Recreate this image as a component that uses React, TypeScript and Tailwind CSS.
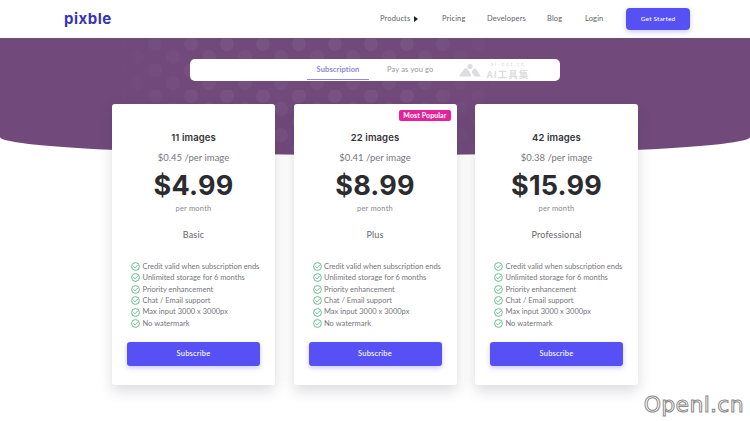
const plans = [
  { name: "11 images", unit: "$0.45 /per image", price: "$4.99", tier: "Basic" },
  { name: "22 images", unit: "$0.41 /per image", price: "$8.99", tier: "Plus", popular: true },
  { name: "42 images", unit: "$0.38 /per image", price: "$15.99", tier: "Professional" },
];

const features = [
  "Credit valid when subscription ends",
  "Unlimited storage for 6 months",
  "Priority enhancement",
  "Chat / Email support",
  "Max input 3000 x 3000px",
  "No watermark",
];

function CheckIcon() {
  return (
    <svg width="9" height="9" viewBox="0 0 18 18" fill="none" stroke="#5fb98a" strokeWidth="1.9" className="shrink-0">
      <circle cx="9" cy="9" r="7.8" />
      <path d="M5.4 9.2l2.5 2.5 4.8-5" strokeLinecap="round" strokeLinejoin="round" />
    </svg>
  );
}

function HexPattern({ className }: { className: string }) {
  return (
    <svg className={className} width="400" height="117" aria-hidden="true">
      <defs>
        <pattern id="hex" width="36" height="26" patternUnits="userSpaceOnUse">
          <circle cx="9" cy="6" r="7" fill="#fff" fillOpacity="0.05" />
          <circle cx="27" cy="19" r="7" fill="#fff" fillOpacity="0.04" />
        </pattern>
        <linearGradient id="hexFade" x1="0" x2="1" y1="0" y2="0">
          <stop offset="0" stopColor="#fff" stopOpacity="0" />
          <stop offset="0.25" stopColor="#fff" stopOpacity="1" />
          <stop offset="0.75" stopColor="#fff" stopOpacity="1" />
          <stop offset="1" stopColor="#fff" stopOpacity="0" />
        </linearGradient>
        <mask id="hexMask">
          <rect width="400" height="117" fill="url(#hexFade)" />
        </mask>
      </defs>
      <rect width="400" height="117" fill="url(#hex)" mask="url(#hexMask)" />
    </svg>
  );
}

function PlanCard({ plan }: { plan: (typeof plans)[number] }) {
  return (
    <div className="relative flex h-[281px] w-[163px] flex-col items-center rounded-[3px] bg-white px-[15px] shadow-[0_6px_14px_rgba(40,40,60,0.16)]">
      {plan.popular && (
        <span className="absolute top-[6px] right-[6px] rounded-[2px] bg-[#e6219a] px-[4px] py-[1px] text-[7px] leading-[9px] font-bold tracking-[0.1px] text-white">
          Most Popular
        </span>
      )}
      <p className="mt-[27px] font-['Inter',sans-serif] text-[9.5px] leading-[14px] font-semibold tracking-[0.1px] text-[#333338]">{plan.name}</p>
      <p className="mt-[6px] text-[9.5px] leading-[14px] text-[#77777d]">{plan.unit}</p>
      <p className="mt-[4px] font-['Inter',sans-serif] text-[27px] leading-[34px] font-bold tracking-[0.2px] text-[#2b2b30]">{plan.price}</p>
      <p className="text-[7.5px] leading-[12px] tracking-[0.2px] text-[#88888e]">per month</p>
      <p className="mt-[13px] text-[9px] leading-[14px] tracking-[0.2px] text-[#66666c]">{plan.tier}</p>
      <ul className="mt-[19px] flex w-full flex-col gap-[0.2px] pl-[4px]">
        {features.map((f) => (
          <li key={f} className="flex h-[11.2px] items-center gap-[2.5px] text-[7.5px] whitespace-nowrap text-[#75757b]">
            <CheckIcon />
            {f}
          </li>
        ))}
      </ul>
      <button className="mt-[13px] h-[24px] w-full rounded-[3px] bg-[#5650f5] text-[7.5px] font-medium tracking-[0.2px] text-white shadow-[0_2px_5px_rgba(86,80,245,0.3)]">
        Subscribe
      </button>
    </div>
  );
}

export default function App() {
  return (
    <div className="relative h-[421px] w-[750px] overflow-hidden bg-white font-['Lato','Liberation_Sans',sans-serif]">
      <header className="flex h-[38px] items-center justify-between pr-[60px] pl-[64px]">
        <span className="font-['Inter',sans-serif] text-[15px] font-bold tracking-[0.5px] text-[#3535b5]">pixble</span>
        <nav className="flex items-center text-[7.5px] tracking-[0.15px] text-[#5f5f66]">
          <span className="flex w-[62px] items-center gap-[4px]">
            Products
            <span className="h-0 w-0 border-y-[3px] border-l-[4px] border-y-transparent border-l-[#222]" />
          </span>
          <span className="w-[45px]">Pricing</span>
          <span className="w-[60px]">Developers</span>
          <span className="w-[38px]">Blog</span>
          <span className="w-[41px]">Login</span>
          <button className="h-[22px] w-[64px] rounded-[4px] bg-[#5650f5] text-[6.5px] font-medium text-white shadow-[0_2px_5px_rgba(86,80,245,0.3)]">
            Get Started
          </button>
        </nav>
      </header>

      <section className="relative flex h-[117px] justify-center overflow-hidden rounded-b-[50%_18px] bg-[#714a7b] pt-[21px]">
        <HexPattern className="absolute top-0 left-[110px]" />
        <div className="relative flex h-[22px] w-[370px] justify-between rounded-[5px] bg-white pr-[29px] pl-[117px]">
          <div className="flex items-center text-[7.5px]">
            <span className="flex h-[19px] w-[62px] items-center justify-center border-b border-[#8f8ae8] font-bold tracking-[0.1px] text-[#8a86dc]">
              Subscription
            </span>
            <span className="ml-[18px] tracking-[0.15px] text-[#95959b]">Pay as you go</span>
          </div>
          <div className="flex items-center gap-[3px] text-[#dddde0]">
            <svg width="24" height="15" viewBox="0 0 24 14" fill="currentColor" aria-hidden="true">
              <circle cx="12" cy="3" r="2.6" />
              <path d="M1 13l5-7.5c1-1.2 2.6-1.2 3.5 0L13 11c.7 1.2 0 2-1.2 2zM13.5 8.5l1.5-2.5c1-1.2 2.6-1.2 3.5 0L23 13H16.5z" />
            </svg>
            <div className="flex w-[46px] flex-col items-center gap-[1px]">
              <span className="text-[5.5px] leading-[7px] tracking-[1.5px]">ai-bot.cn</span>
              <span className="font-['Noto_Sans_CJK_SC',sans-serif] text-[9.5px] leading-[11px] font-bold tracking-[1px] whitespace-nowrap">AI工具集</span>
            </div>
          </div>
        </div>
      </section>

      <main className="relative -mt-[51px] flex justify-center gap-[18.5px]">
        {plans.map((p) => (
          <PlanCard key={p.name} plan={p} />
        ))}
      </main>

      <span className="absolute right-[6px] bottom-[2px] font-['DejaVu_Sans',sans-serif] text-[22px] leading-[28px] tracking-[0.3px] text-white [-webkit-text-stroke:1px_#8a8a8a]">
        Openl.cn
      </span>
    </div>
  );
}
